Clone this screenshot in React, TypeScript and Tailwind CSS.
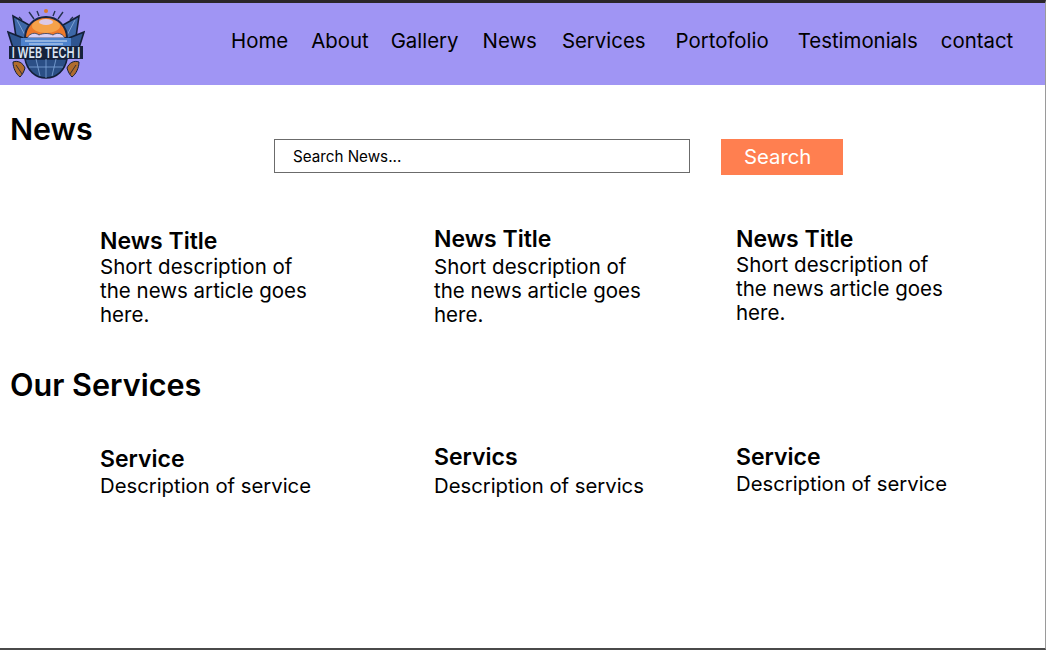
const navLinks = [
  { label: "Home", className: "ml-[146px]" },
  { label: "About", className: "ml-[23px]" },
  { label: "Gallery", className: "ml-[22px]" },
  { label: "News", className: "ml-[24px]" },
  { label: "Services", className: "ml-[25px]" },
  { label: "Portofolio", className: "ml-[30px]" },
  { label: "Testimonials", className: "ml-[29px]" },
  { label: "contact", className: "ml-[23px]" },
];

const news = [
  { className: "w-[334px] pt-[16px]", textClass: "" },
  { className: "w-[302px] pt-[14px]", textClass: "mt-[2px]" },
  { className: "w-[240px] pt-[14px]", textClass: "" },
];

const services = [
  { title: "Service", text: "Description of service", className: "w-[334px] pt-[2px]", textClass: "mt-[1px]" },
  { title: "Servics", text: "Description of servics", className: "w-[302px]", textClass: "mt-[3px]" },
  { title: "Service", text: "Description of service", className: "w-[240px]", textClass: "mt-[1px]" },
];

function Logo() {
  return (
    <svg width="78" height="78" viewBox="0 0 78 78" className="shrink-0">
      <circle cx="39" cy="6" r="2" fill="#d9762c" />
      <path d="M22 7l5 7M56 7l-5 7M30 6l2 5M48 6l-2 5M12 12l3 3M66 12l-3 3" stroke="#24324f" strokeWidth="1.4" />
      {/* leaves */}
      <path d="M6 11l16 9 2 20-15-8z" fill="#3d68a8" stroke="#131f38" strokeWidth="1.6" />
      <path d="M72 11l-16 9-2 20 15-8z" fill="#3d68a8" stroke="#131f38" strokeWidth="1.6" />
      <path d="M10 15l10 19M68 15l-10 19" stroke="#8fb0dd" strokeWidth="0.8" />
      <path d="M1 27l15 6 6 10H6z" fill="#2f5590" stroke="#131f38" strokeWidth="1.6" />
      <path d="M77 27l-15 6-6 10h16z" fill="#2f5590" stroke="#131f38" strokeWidth="1.6" />
      {/* dome */}
      <path d="M18 33a21 21 0 0 1 42 0z" fill="#ee7a2b" stroke="#1a2744" strokeWidth="2" />
      <ellipse cx="39" cy="21" rx="14" ry="7" fill="#f5a24a" />
      <ellipse cx="39" cy="17" rx="7" ry="3" fill="#dcc9e8" />
      <path d="M20 33c3-5 8-6 12-3 4-2 10-2 14 0 4-3 9-2 12 3z" fill="#d8cff4" stroke="#2a3a5c" strokeWidth="0.8" />
      {/* band */}
      <rect x="14" y="33" width="50" height="9" fill="#4d82cd" />
      <path d="M18 36h42M22 39h34" stroke="#d5e4f6" strokeWidth="1.2" />
      <rect x="2" y="41" width="74" height="13" fill="#16223c" />
      <text
        transform="translate(39 52.5) scale(0.72 1)"
        textAnchor="middle"
        fontFamily="Inter, sans-serif"
        fontSize="15"
        fontWeight="600"
        fill="#dce6f4"
      >
        I WEB TECH I
      </text>
      {/* globe */}
      <path d="M18 54h42c-2 11-10 19-21 19S20 65 18 54z" fill="#2b4f86" stroke="#131f38" strokeWidth="1.5" />
      <path d="M39 54v19M29 54l4 17M49 54l-4 17M22 62h34" stroke="#7fa4d8" strokeWidth="0.8" />
      {/* wheat */}
      <path d="M6 57c5-2 10 1 12 6-1 4-3 7-5 9-4-3-7-9-7-15z" fill="#b06c2c" stroke="#131f38" strokeWidth="1" />
      <path d="M72 57c-5-2-10 1-12 6 1 4 3 7 5 9 4-3 7-9 7-15z" fill="#b06c2c" stroke="#131f38" strokeWidth="1" />
      <path d="M9 60l6 9M69 60l-6 9" stroke="#131f38" strokeWidth="0.8" />
    </svg>
  );
}

export default function App() {
  return (
    <div className="w-[1046px] h-[650px] overflow-hidden bg-white border-t-[3px] border-t-[#2a2629] border-r border-r-[#9a9a9a] border-b-2 border-b-[#4a4a4a] text-black font-['Inter',sans-serif]">
      <header className="h-[82px] bg-[#a095f4] flex items-center pl-[7px]">
        <Logo />
        <nav className="flex items-center text-[20.4px] leading-[24px] -mt-[7px]">
          {navLinks.map((link) => (
            <a key={link.label} href="#" className={link.className}>
              {link.label}
            </a>
          ))}
        </nav>
      </header>

      <main>
        <div className="flex items-start pl-[10px]">
          <h1 className="w-[264px] pt-[26px] text-[30.4px] leading-[36px] font-semibold">News</h1>
          <input
            placeholder="Search News..."
            className="mt-[54px] w-[416px] h-[34px] border border-[#6b6b6b] pl-[18px] text-[15.2px] outline-none placeholder:text-black"
          />
          <button className="ml-[31px] mt-[54px] w-[122px] h-[36px] bg-[#ff7f50] text-white text-[20.3px] text-left pl-[23px]">
            Search
          </button>
        </div>

        <div className="flex pl-[100px] mt-[36px]">
          {news.map((item, i) => (
            <article key={i} className={item.className}>
              <h3 className="text-[23px] leading-[28px] font-semibold">News Title</h3>
              <p className={`w-[215px] text-[20.5px] leading-[24px] ${item.textClass}`}>
                Short description of the news article goes here.
              </p>
            </article>
          ))}
        </div>

        <h2 className="pl-[10px] mt-[40px] text-[30.6px] leading-[36px] font-semibold">Our Services</h2>

        <div className="flex pl-[100px] mt-[40px]">
          {services.map((item, i) => (
            <article key={i} className={item.className}>
              <h3 className="text-[23px] leading-[28px] font-semibold">{item.title}</h3>
              <p className={`text-[20.3px] leading-[24px] whitespace-nowrap ${item.textClass}`}>{item.text}</p>
            </article>
          ))}
        </div>
      </main>
    </div>
  );
}
